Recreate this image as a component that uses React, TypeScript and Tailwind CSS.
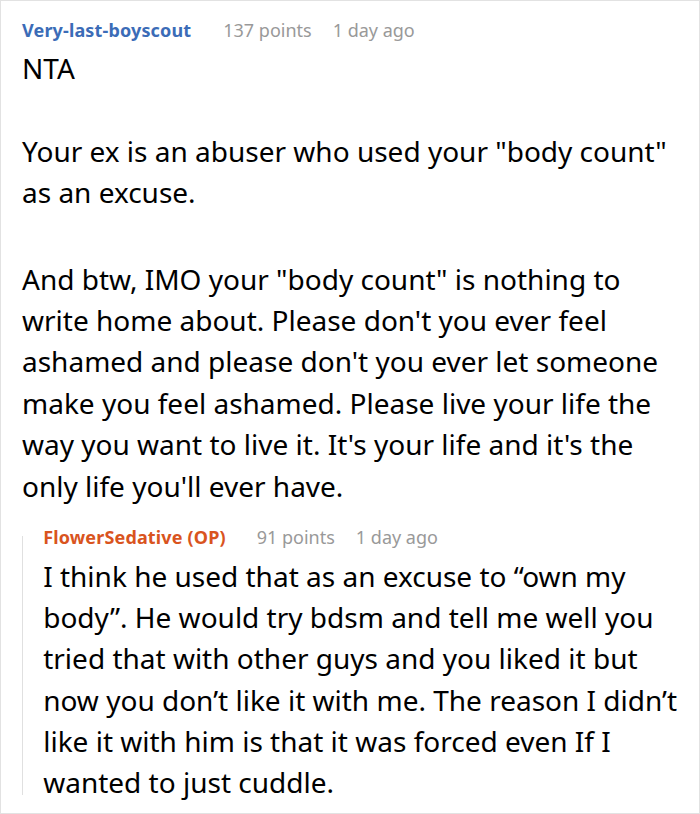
export default function App() {
  const font = { fontFamily: '"Noto Sans", "Open Sans", sans-serif' };

  return (
    <div
      className="w-[700px] h-[814px] border border-[#e2e2e2] bg-white pt-[17px] pl-[21px] pr-[18px]"
      style={font}
    >
      {/* top-level comment */}
      <div className="flex items-baseline text-[18px] leading-[24px]">
        <span className="font-bold text-[#3b6cb7] tracking-[0.15px]">Very-last-boyscout</span>
        <span className="ml-[32px] text-[#999]">137 points</span>
        <span className="ml-[21px] text-[#999]">1 day ago</span>
      </div>
      <div className="text-[28px] leading-[41.4px] text-black mt-[6px]">
        <p>NTA</p>
        <p className="mt-[41.4px]">
          Your ex is an abuser who used your "body count" as an excuse.
        </p>
        <p className="mt-[45px]">
          And btw, IMO your "body count" is nothing to write home about. Please
          don't you ever feel ashamed and please don't you ever let someone make
          you feel ashamed. Please live your life the way you want to live it.
          It's your life and it's the only life you'll ever have.
        </p>
      </div>

      {/* reply */}
      <div className="mt-[18px] flex">
        <div className="mt-[11px] mb-[8px] w-px bg-[#e0e0e0]" />
        <div className="pl-[21px]">
          <div className="flex items-baseline text-[18px] leading-[24px]">
            <span className="font-bold text-[#d9541e] tracking-[0.15px]">FlowerSedative (OP)</span>
            <span className="ml-[31px] text-[#999]">91 points</span>
            <span className="ml-[21px] text-[#999]">1 day ago</span>
          </div>
          <p className="text-[28px] leading-[41.2px] text-black mt-[7px]">
            I think he used that as an excuse to “own my body”. He would try
            bdsm and tell me well you tried that with other guys and you liked
            it but now you don’t like it with me. The reason I didn’t like it
            with him is that it was forced even If I wanted to just cuddle.
          </p>
        </div>
      </div>
    </div>
  );
}
